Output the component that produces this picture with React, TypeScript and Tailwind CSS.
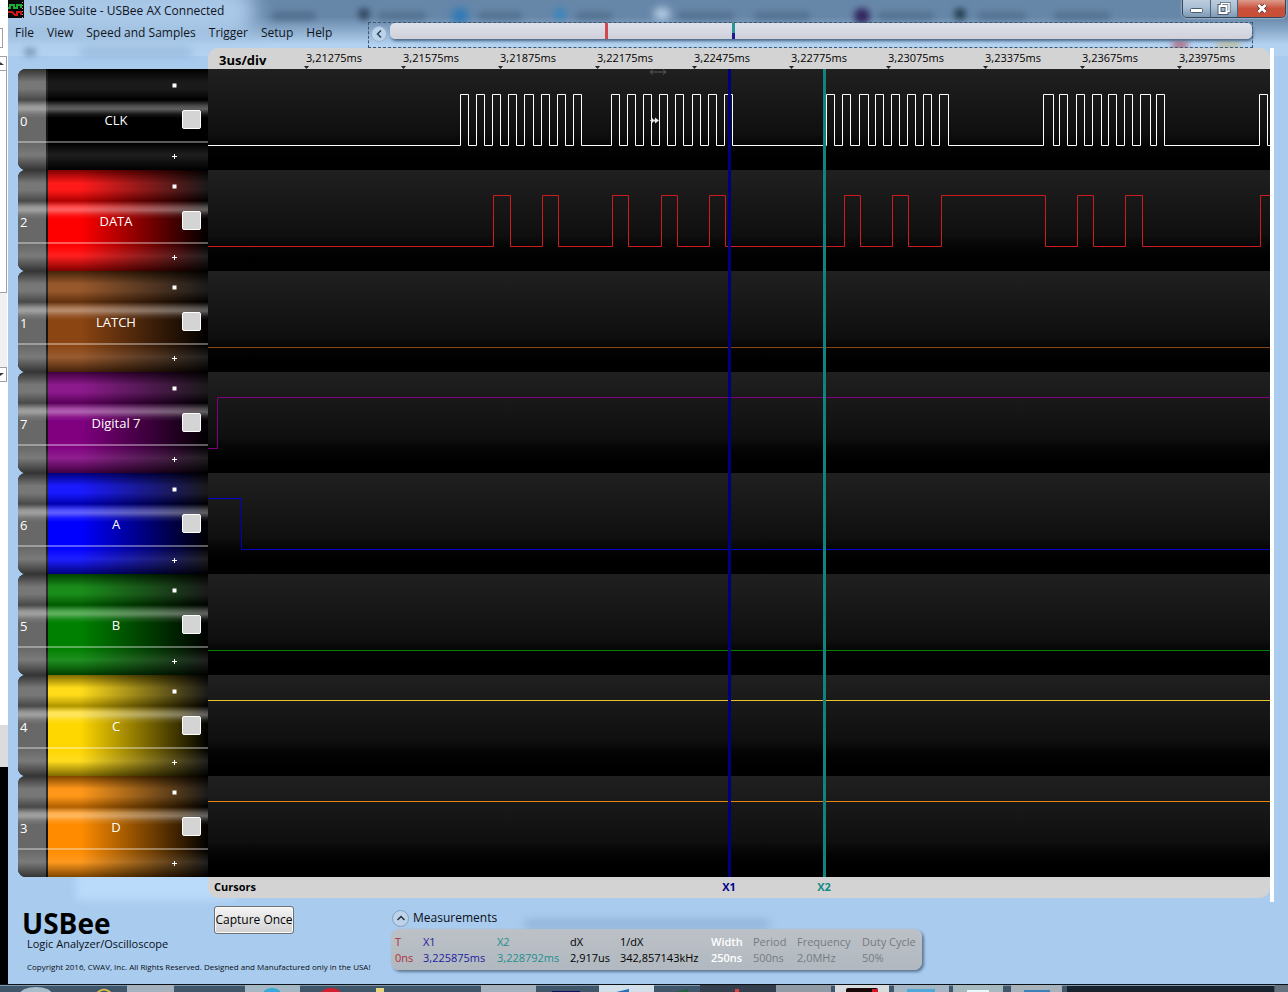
import React from "react";

type Channel = {
  id: number;
  name: string;
  color: string;
  trace: string;
  high: boolean;
  edges: number[];
};

const PLOT_WIDTH = 1062;
const ROW_HEIGHT = 101;

const CHANNELS: Channel[] = [
  {
    id: 0,
    name: "CLK",
    color: "#000000",
    trace: "#ffffff",
    high: false,
    edges: [
      252, 260, 268, 276, 284, 292, 300, 308, 316, 325, 333, 341, 349, 357, 365, 373,
      403, 411, 419, 427, 435, 443, 451, 459, 467, 475, 484, 492, 500, 508, 516, 524,
      618, 626, 634, 642, 651, 660, 667, 675, 683, 691, 699, 707, 715, 723, 731, 740,
      835, 845, 851, 859, 868, 876, 884, 893, 900, 908, 916, 924, 932, 942, 948, 956,
      1051, 1059,
    ],
  },
  {
    id: 2,
    name: "DATA",
    color: "#ff0000",
    trace: "#cc1c20",
    high: false,
    edges: [285, 302, 334, 350, 404, 420, 453, 469, 501, 517, 636, 652, 684, 700, 733, 837, 869, 885, 917, 934, 1052],
  },
  { id: 1, name: "LATCH", color: "#8b4513", trace: "#8b4513", high: false, edges: [] },
  { id: 7, name: "Digital 7", color: "#800080", trace: "#800080", high: false, edges: [9] },
  { id: 6, name: "A", color: "#0000ff", trace: "#0000c8", high: true, edges: [33] },
  { id: 5, name: "B", color: "#008000", trace: "#008000", high: false, edges: [] },
  { id: 4, name: "C", color: "#ffd700", trace: "#e8c030", high: true, edges: [] },
  { id: 3, name: "D", color: "#ff8c00", trace: "#e88410", high: true, edges: [] },
];

const TIMES = [
  "3,21275ms",
  "3,21575ms",
  "3,21875ms",
  "3,22175ms",
  "3,22475ms",
  "3,22775ms",
  "3,23075ms",
  "3,23375ms",
  "3,23675ms",
  "3,23975ms",
];

const MEASUREMENTS = [
  { label: "T", value: "0ns", style: "w-[28px] text-[#b03038]" },
  { label: "X1", value: "3,225875ms", style: "w-[74px] text-[#1c1ca0]" },
  { label: "X2", value: "3,228792ms", style: "w-[73px] text-[#1d9090]" },
  { label: "dX", value: "2,917us", style: "w-[50px] text-black" },
  { label: "1/dX", value: "342,857143kHz", style: "w-[91px] text-black" },
  { label: "Width", value: "250ns", style: "w-[42px] text-white font-semibold" },
  { label: "Period", value: "500ns", style: "w-[44px] text-[#777b80]" },
  { label: "Frequency", value: "2,0MHz", style: "w-[65px] text-[#777b80]" },
  { label: "Duty Cycle", value: "50%", style: "w-[60px] text-[#777b80]" },
];

function tracePath(channel: Channel) {
  const top = 25.5;
  const bottom = 76.5;
  let high = channel.high;
  let d = `M0 ${high ? top : bottom}`;
  for (const x of channel.edges) {
    high = !high;
    d += `H${x + 0.5}V${high ? top : bottom}`;
  }
  return `${d}H${PLOT_WIDTH}`;
}

function Backdrop() {
  return (
    <div aria-hidden="true" className="pointer-events-none absolute inset-0 overflow-hidden">
      <div className="absolute inset-x-0 top-0 h-14 bg-gradient-to-b from-[#6787a9] from-30% to-[#b3d2f1] to-80%" />
      <div className="absolute -left-8 -top-4 h-14 w-[280px] rounded-full bg-[#a9c8e8] blur-[10px]" />
      <div className="absolute left-[264px] top-3 h-2 w-11 rounded bg-[#46637f] opacity-70 blur-[3px]" />
      <div className="absolute left-[350px] top-2 h-3 w-3 rounded-full bg-[#26394d] opacity-80 blur-[3px]" />
      <div className="absolute left-[370px] top-3 h-2 w-12 rounded bg-[#46637f] opacity-60 blur-[3px]" />
      <div className="absolute left-[444px] top-2 h-4 w-4 rounded-full bg-[#2a78b8] blur-[4px]" />
      <div className="absolute left-[470px] top-3 h-2 w-11 rounded bg-[#46637f] opacity-60 blur-[3px]" />
      <div className="absolute left-[546px] top-2 h-3 w-3 rounded-full bg-[#3a86bc] blur-[3px]" />
      <div className="absolute left-[568px] top-3 h-2 w-9 rounded bg-[#46637f] opacity-60 blur-[3px]" />
      <div className="absolute left-[646px] top-2 h-3 w-4 rounded-full bg-[#bcd3ea] blur-[4px]" />
      <div className="absolute left-[670px] top-3 h-2 w-14 rounded bg-[#46637f] opacity-60 blur-[3px]" />
      <div className="absolute left-[746px] top-3 h-2 w-14 rounded bg-[#46637f] opacity-60 blur-[3px]" />
      <div className="absolute left-[846px] top-2 h-4 w-4 rounded-full bg-[#33285f] blur-[3px]" />
      <div className="absolute left-[870px] top-3 h-2 w-14 rounded bg-[#46637f] opacity-60 blur-[3px]" />
      <div className="absolute left-[946px] top-2 h-3 w-3 rounded-full bg-[#27404f] blur-[3px]" />
      <div className="absolute left-[970px] top-3 h-2 w-12 rounded bg-[#46637f] opacity-60 blur-[3px]" />
      <div className="absolute left-[1046px] top-3 h-2 w-14 rounded bg-[#46637f] opacity-60 blur-[3px]" />
      <div className="absolute left-[72px] top-[48px] h-2 w-28 rounded bg-[#7c9fc6] opacity-50 blur-[4px]" />
      <div className="absolute left-[16px] top-[48px] h-2 w-3 rounded bg-[#5f7f9f] opacity-70 blur-[3px]" />
      <div className="absolute left-[1164px] top-[41px] h-2 w-4 rounded bg-[#b03a50] opacity-70 blur-[3px]" />
      <div className="absolute left-[1208px] top-[41px] h-2 w-6 rounded bg-[#c0b070] opacity-60 blur-[3px]" />
      <div className="absolute bottom-[84px] left-[68px] h-7 w-[160px] bg-[#bbdbfb] blur-[4px]" />
      <div className="absolute bottom-[56px] left-[516px] h-2 w-[246px] rounded bg-[#7c9fc6] opacity-60 blur-[4px]" />
    </div>
  );
}

function TitleBar() {
  return (
    <header className="flex h-[22px] items-start">
      <svg className="h-[18px] w-4" viewBox="0 0 16 18" aria-hidden="true">
        <rect width="16" height="18" fill="#080808" />
        <path d="M0 8H2V5H6V8H9V5H13V8" fill="none" stroke="#18b030" strokeWidth="2" />
        <path d="M0 12H4L7 15H9V12H13V15" fill="none" stroke="#d01818" strokeWidth="2" />
        <path d="M14.5 2V18" stroke="#c8a070" strokeWidth="1" strokeDasharray="1 2" />
      </svg>
      <h1 className="ml-[5px] mt-[2px] text-xs leading-[18px] text-[#10151c]">USBee Suite - USBee AX Connected</h1>
      <div className="ml-auto mr-[2px] flex h-[18px] overflow-hidden rounded-b-[5px] border border-t-0 border-[#34465a] shadow-[0_0_2px_#ffffff]">
        <button
          aria-label="Minimize"
          className="flex w-7 items-center justify-center border-r border-[#4b617a] bg-gradient-to-b from-[#bccddd] via-[#a9bfd4] via-45% to-[#7d99b5]"
        >
          <svg width="13" height="5" viewBox="0 0 13 5" className="mt-1">
            <rect x="0.5" y="0.5" width="12" height="4" rx="1" fill="#fff" stroke="#4a5a6c" />
          </svg>
        </button>
        <button
          aria-label="Restore"
          className="flex w-[27px] items-center justify-center border-r border-[#4b617a] bg-gradient-to-b from-[#bccddd] via-[#a9bfd4] via-45% to-[#7d99b5]"
        >
          <svg width="14" height="13" viewBox="0 0 14 13" fill="none">
            <path d="M4.5 3V1.5H12V9.5H10" stroke="#4a5a6c" strokeWidth="3" />
            <rect x="2.5" y="4" width="7" height="7" stroke="#4a5a6c" strokeWidth="4" />
            <path d="M4.5 3V1.5H12V9.5H10" stroke="#fff" strokeWidth="1.6" />
            <rect x="2.5" y="4" width="7" height="7" stroke="#fff" strokeWidth="2" />
          </svg>
        </button>
        <button
          aria-label="Close"
          className="flex w-[47px] items-center justify-center bg-gradient-to-b from-[#dd9a8c] via-[#c9503c] via-50% to-[#c94f35]"
        >
          <svg width="12" height="11" viewBox="0 0 12 11">
            <path d="M2.5 2L9.5 9M9.5 2L2.5 9" stroke="#5a3030" strokeWidth="4.4" />
            <path d="M2.5 2L9.5 9M9.5 2L2.5 9" stroke="#fff" strokeWidth="2.8" />
          </svg>
        </button>
      </div>
    </header>
  );
}

function MenuBar() {
  return (
    <div className="flex h-[26px]">
      <nav className="flex w-[360px] gap-[13px] pl-[7px] pt-[2px] text-xs leading-[18px] text-[#10151c]">
        {["File", "View", "Speed and Samples", "Trigger", "Setup", "Help"].map((item) => (
          <button key={item} className="h-[18px] whitespace-nowrap">
            {item}
          </button>
        ))}
      </nav>
      <div className="mr-[35px] flex flex-1 gap-[3px] border border-dashed border-[#40566c] pl-[2px]">
        <button
          aria-label="Scroll left"
          className="mt-[3px] flex h-4 w-4 items-center justify-center rounded-full border border-[#9bb4cf] bg-[#bcd3ea]"
        >
          <svg width="6" height="8" viewBox="0 0 6 8">
            <path d="M5 0.5L1.5 4L5 7.5" fill="none" stroke="#24405c" strokeWidth="1.5" />
          </svg>
        </button>
        <div className="relative h-4 flex-1 rounded-[5px] bg-gradient-to-b from-[#dfe2ea] to-[#cfd0da] shadow-[1px_2px_3px_#4a6786]">
          <span className="absolute left-[215px] top-0 h-4 w-[3px] bg-[#cc4a50]" />
          <span className="absolute left-[342px] top-0 h-4 w-[3px] bg-gradient-to-b from-[#2b9494] from-65% to-[#1c1c90] to-65%" />
        </div>
      </div>
    </div>
  );
}

function ChannelHeader({ channel }: { channel: Channel }) {
  return (
    <div className="relative flex h-[101px] overflow-hidden rounded-l-[8px] bg-black text-[13px] leading-[18px] text-white">
      <div className="flex w-[30px] items-center border-r-2 border-[#151515] bg-[#686868]">
        <span className="relative z-10 pl-[2px] pt-[2px]">{channel.id}</span>
      </div>
      <div className="flex flex-1 items-center" style={{ backgroundColor: channel.color }}>
        <div className="flex h-full flex-1 items-center bg-gradient-to-r from-transparent from-20% to-black">
          <span className="relative z-10 w-[136px] text-center">{channel.name}</span>
          <div className="relative z-10 -ml-4 flex h-full w-[38px] flex-col">
            <button aria-label={`Shrink ${channel.name}`} className="flex h-8 w-3 items-center justify-center">
              <svg width="5" height="5" viewBox="0 0 5 5">
                <path d="M0.5 0.5H4.5V4.5H0.5Z" fill="#fff" />
              </svg>
            </button>
            <input
              type="checkbox"
              aria-label={`Select ${channel.name}`}
              className="ml-[14px] mt-[9px] h-[19px] w-[19px] appearance-none rounded-[2px] border border-white bg-[#d4d4d4]"
            />
            <button
              aria-label={`Enlarge ${channel.name}`}
              className="mt-[13px] flex h-7 w-3 items-center justify-center"
            >
              <svg width="5" height="5" viewBox="0 0 5 5">
                <path d="M2.5 0V5M0 2.5H5" stroke="#fff" strokeWidth="1" />
              </svg>
            </button>
          </div>
        </div>
      </div>
      <div className="pointer-events-none absolute inset-0 bg-[linear-gradient(180deg,rgba(0,0,0,0.5)_0px,rgba(255,255,255,0.1)_13px,rgba(255,255,255,0.1)_20px,rgba(0,0,0,0.3)_31px,rgba(255,255,255,0.3)_37px,rgba(255,255,255,0.38)_40px,rgba(255,255,255,0.1)_45px,transparent_49px,transparent_72px,rgba(255,255,255,0.36)_72px,rgba(255,255,255,0.36)_74px,transparent_74px,rgba(255,255,255,0.12)_86px,rgba(0,0,0,0.5)_101px)]" />
    </div>
  );
}

function Cursor({ label, place, line, text }: { label: string; place: string; line: string; text: string }) {
  return (
    <div className={`absolute bottom-0 top-0 flex w-5 flex-col items-center ${place}`}>
      <span className={`w-[3px] flex-1 ${line}`} />
      <span className={`h-[21px] text-[11px] font-bold leading-[20px] ${text}`}>{label}</span>
    </div>
  );
}

function Plot() {
  return (
    <div className="relative">
      {CHANNELS.map((channel) => (
        <svg
          key={channel.id}
          className="block h-[101px] w-full bg-gradient-to-b from-[#202020] via-[#0f0f0f] via-65% to-black"
          viewBox={`0 0 ${PLOT_WIDTH} ${ROW_HEIGHT}`}
          preserveAspectRatio="none"
          role="img"
          aria-label={`${channel.name} trace`}
        >
          <path d={tracePath(channel)} fill="none" stroke={channel.trace} strokeWidth="1" />
        </svg>
      ))}
      <svg className="absolute left-[441px] top-0" width="18" height="6" viewBox="0 0 18 6" aria-hidden="true">
        <path d="M1 3H17M4 0.5L1 3L4 5.5M14 0.5L17 3L14 5.5" fill="none" stroke="#5a5a5a" />
      </svg>
      <svg className="absolute left-[442px] top-[48px]" width="9" height="7" viewBox="0 0 9 7" aria-hidden="true">
        <path d="M0 3.5L3 1V6ZM9 3.5L5 0.5V6.5Z" fill="#e8e8e8" />
        <path d="M2 3.5H6" stroke="#e8e8e8" strokeWidth="2" />
      </svg>
      <div className="h-[21px] rounded-b-[10px] bg-[#d3d3d3] pl-[6px] text-[11px] font-bold leading-[20px] text-black">
        Cursors
      </div>
      <Cursor label="X1" place="left-[511px]" line="bg-[#00007d]" text="text-[#00008b]" />
      <Cursor label="X2" place="left-[606px]" line="bg-[#148080]" text="text-[#128b8b]" />
    </div>
  );
}

function Ruler() {
  return (
    <div className="flex h-[21px] overflow-hidden rounded-t-[10px] bg-[#d3d3d3] text-black">
      <span className="w-[98px] shrink-0 pl-[11px] pt-[3px] text-[13px] font-bold leading-[18px]">3us/div</span>
      {TIMES.map((time) => (
        <span key={time} className="flex w-[97px] shrink-0 flex-col">
          <span className="h-[18px] pt-[2px] text-[11px] leading-[16px]">{time}</span>
          <svg width="5" height="3" viewBox="0 0 5 3" className="-ml-[2px]" aria-hidden="true">
            <path d="M0 0H5L2.5 3Z" fill="#222" />
          </svg>
        </span>
      ))}
    </div>
  );
}

function Footer() {
  return (
    <footer className="flex h-[82px] text-[#0a0f16]">
      <div className="flex w-[206px] flex-col whitespace-nowrap pl-[14px] pt-[7px]">
        <span className="text-[28px] font-bold leading-[28px] text-black">USBee</span>
        <span className="pl-[5px] text-[11px] leading-[14px]">Logic Analyzer/Oscilloscope</span>
        <span className="pl-[5px] pt-[10px] text-[8px] leading-[12px]">
          Copyright 2016, CWAV, Inc. All Rights Reserved. Designed and Manufactured only in the USA!
        </span>
      </div>
      <button className="mt-1 h-7 w-20 whitespace-nowrap rounded-[3px] border border-[#707070] bg-gradient-to-b from-[#f4f4f4] to-[#d2d2d2] text-xs text-black shadow-[inset_0_0_0_1px_#fafafa]">
        Capture Once
      </button>
      <section className="ml-[97px] pt-[7px]">
        <button className="flex h-[18px] items-center gap-1 pl-px text-xs">
          <span className="flex h-[17px] w-[17px] items-center justify-center rounded-full border border-[#86a0ba] bg-[#bcd3ea]">
            <svg width="8" height="6" viewBox="0 0 8 6">
              <path d="M0.5 5L4 1.5L7.5 5" fill="none" stroke="#24303c" strokeWidth="1.5" />
            </svg>
          </span>
          Measurements
        </button>
        <div className="mt-[2px] h-[41px] rounded-[8px] bg-gradient-to-b from-[#bcc1c7] to-[#b1b8bf] pl-1 pt-[5px] shadow-[2px_2px_3px_#5c7590]">
          <table className="w-[527px] table-fixed border-collapse text-left text-[11px] leading-[16px]">
            <thead>
              <tr>
                {MEASUREMENTS.map((m) => (
                  <th key={m.label} scope="col" className={`whitespace-nowrap p-0 font-normal ${m.style}`}>
                    {m.label}
                  </th>
                ))}
              </tr>
            </thead>
            <tbody>
              <tr>
                {MEASUREMENTS.map((m) => (
                  <td key={m.label} className={`whitespace-nowrap p-0 ${m.style}`}>
                    {m.value}
                  </td>
                ))}
              </tr>
            </tbody>
          </table>
        </div>
      </section>
    </footer>
  );
}

function Taskbar() {
  return (
    <div className="h-2 overflow-hidden border-t border-[#0c1218] bg-[#3f566b]">
      <svg className="block h-2 w-full" viewBox="0 0 1288 8" preserveAspectRatio="none" aria-hidden="true">
        <rect width="1288" height="1" fill="#7f97ad" />
        <ellipse cx="36" cy="9" rx="16" ry="7" fill="#a9bccb" />
        <path d="M97 8Q104 1 111 8" fill="none" stroke="#d6b94c" strokeWidth="2" />
        <rect x="127" width="47" height="8" fill="#a5b2bd" />
        <rect x="245" width="55" height="8" fill="#a5b6c4" />
        <ellipse cx="272" cy="9" rx="9" ry="6" fill="#38a8d8" />
        <ellipse cx="331" cy="9" rx="10" ry="6" fill="#d32030" />
        <rect x="376" y="3" width="8" height="5" fill="#e6d680" />
        <rect x="481" width="55" height="8" fill="#a5b2bd" />
        <rect x="552" y="6" width="28" height="2" fill="#101060" />
        <rect x="599" width="55" height="8" fill="#d2dee8" />
        <path d="M612 8L629 4V8Z" fill="#2570b8" />
        <path d="M672 8L688 4V8Z" fill="#206040" />
        <rect x="700" width="76" height="8" fill="#343f4d" />
        <rect x="735" y="4" width="4" height="4" fill="#e04040" />
        <rect x="776" width="55" height="8" fill="#909ba5" />
        <rect x="835" width="54" height="8" fill="#d8dcdf" />
        <rect x="846" y="3" width="32" height="5" rx="2" fill="#180808" />
        <rect x="872" y="4" width="6" height="4" fill="#d01828" />
        <rect x="894" width="55" height="8" fill="#a5b6c4" />
        <rect x="907" y="4" width="28" height="4" fill="#50a8d8" />
        <rect x="953" width="50" height="8" fill="#a5b9bf" />
        <rect x="967" y="5" width="22" height="2" fill="#e6fafa" />
        <rect x="1011" width="51" height="8" fill="#a8b2bb" />
        <rect x="1024" y="5" width="26" height="2" fill="#3c80b8" />
        <rect x="1067" y="1" width="207" height="7" fill="#18232e" />
        <rect x="1275" width="13" height="8" fill="#65717d" />
      </svg>
    </div>
  );
}

export default function App() {
  return (
    <div className="flex min-h-screen flex-col bg-[#a9cbee] font-['Open_Sans','Noto_Sans',sans-serif]">
      <div className="flex flex-1">
        <aside aria-hidden="true" className="flex w-2 shrink-0 flex-col bg-white">
          <div className="mt-7 h-5 w-[3px] border border-l-0 border-[#a0a0a0]" />
          <div className="mt-2 flex h-[15px] w-[7px] items-center border border-l-0 border-[#a0a0a0]">
            <svg width="4" height="3" viewBox="0 0 4 3">
              <path d="M0 0L4 3H0Z" fill="#333" />
            </svg>
          </div>
          <div className="h-[222px] w-[7px] border border-l-0 border-t-0 border-[#a0a0a0]" />
          <div className="h-[74px] w-[7px] bg-[#f0f0f0]" />
          <div className="flex h-[15px] w-[7px] items-center border border-l-0 border-[#a0a0a0]">
            <svg width="4" height="3" viewBox="0 0 4 3">
              <path d="M0 0H4L0 3Z" fill="#333" />
            </svg>
          </div>
          <div className="flex-1" />
          <div className="h-[42px] bg-[#dcdcdc]" />
          <div className="h-[217px] bg-black" />
        </aside>
        <div className="relative min-w-0 flex-1 bg-[#a9cbee]">
          <Backdrop />
          <div className="relative">
            <TitleBar />
            <MenuBar />
            <main className="flex pl-[10px] pr-[14px]">
              <div className="w-[190px] shrink-0 pt-[21px]">
                {CHANNELS.map((channel) => (
                  <ChannelHeader key={channel.id} channel={channel} />
                ))}
              </div>
              <div className="min-w-0 flex-1">
                <Ruler />
                <Plot />
              </div>
              <div className="h-[854px] w-1 bg-white" />
            </main>
            <Footer />
          </div>
        </div>
      </div>
      <Taskbar />
    </div>
  );
}
